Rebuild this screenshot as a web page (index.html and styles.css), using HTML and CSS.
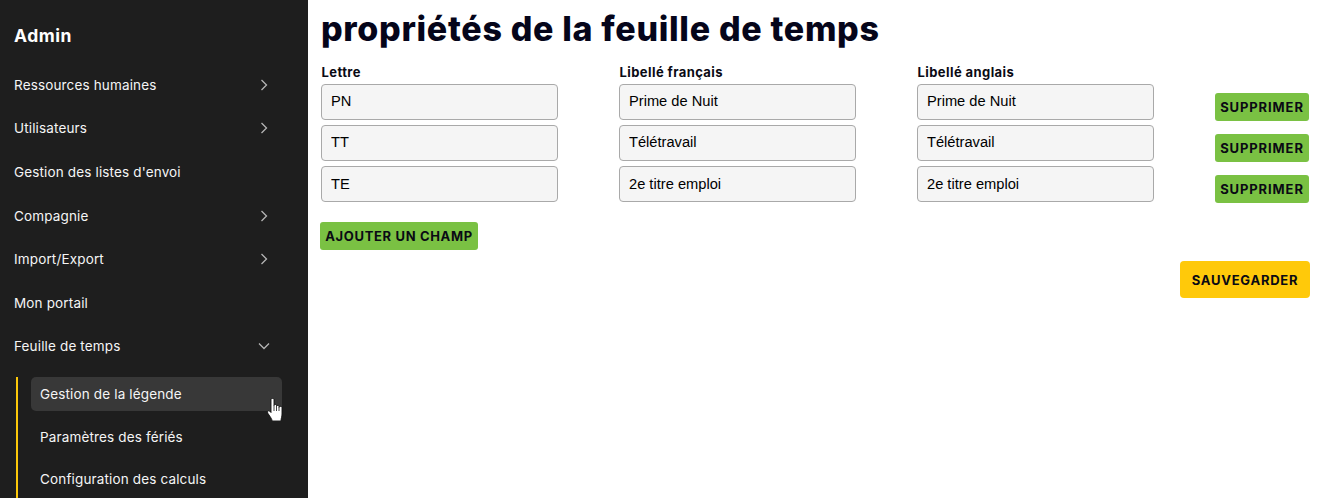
FILE: index.html
```html
<!DOCTYPE html>
<html lang="fr">
<head>
<meta charset="utf-8">
<title>Propriétés de la feuille de temps</title>
<link rel="stylesheet" href="styles.css">
</head>
<body>
<div class="app">
  <aside class="sidebar">
    <div class="brand">Admin</div>
    <nav class="nav">
      <a class="item">Ressources humaines<svg class="chev" viewBox="0 0 12 12"><path d="M3.5 1 8.5 6 3.5 11"/></svg></a>
      <a class="item">Utilisateurs<svg class="chev" viewBox="0 0 12 12"><path d="M3.5 1 8.5 6 3.5 11"/></svg></a>
      <a class="item">Gestion des listes d'envoi</a>
      <a class="item">Compagnie<svg class="chev" viewBox="0 0 12 12"><path d="M3.5 1 8.5 6 3.5 11"/></svg></a>
      <a class="item">Import/Export<svg class="chev" viewBox="0 0 12 12"><path d="M3.5 1 8.5 6 3.5 11"/></svg></a>
      <a class="item">Mon portail</a>
      <a class="item">Feuille de temps<svg class="chev" viewBox="0 0 12 12"><path d="M1 3.5 6 8.5 11 3.5"/></svg></a>
    </nav>
    <div class="sub">
      <a class="subitem active">Gestion de la légende</a>
      <a class="subitem">Paramètres des fériés</a>
      <a class="subitem">Configuration des calculs</a>
      <svg class="cursor" viewBox="0 0 16 23"><path d="M4 1.5C4 0 7 0 7 1.500V7.500C7 6 9.500 6 9.500 7.500V8.500C9.500 7 12 7 12 8.500V9.500C12 8 15 8 15 9.500V16C15 19 14 20 14 23H5C5 21 4 20 1 15.500C0 14 1 12 2.500 13L4 14.500Z"/><path class="lines" d="M7 7.500V13M9.500 8.500V13M12 9.500V13"/></svg>
    </div>
  </aside>
  <main class="main">
    <h1 class="title">propriétés de la feuille de temps</h1>
    <div class="heads">
      <label class="head">Lettre</label>
      <label class="head">Libellé français</label>
      <label class="head">Libellé anglais</label>
    </div>
    <div class="row">
      <input class="field" value="PN"><input class="field" value="Prime de Nuit"><input class="field" value="Prime de Nuit">
      <button class="btn del">SUPPRIMER</button>
    </div>
    <div class="row">
      <input class="field" value="TT"><input class="field" value="Télétravail"><input class="field" value="Télétravail">
      <button class="btn del">SUPPRIMER</button>
    </div>
    <div class="row">
      <input class="field" value="TE"><input class="field" value="2e titre emploi"><input class="field" value="2e titre emploi">
      <button class="btn del">SUPPRIMER</button>
    </div>
    <button class="btn add">AJOUTER UN CHAMP</button>
    <div class="actions"><button class="btn save">SAUVEGARDER</button></div>
  </main>
</div>
</body>
</html>
```
FILE: styles.css
```css
* { box-sizing: border-box; }
html, body { margin: 0; height: 100%; overflow: hidden; background: #fff; }
body { font-family: Inter, "Liberation Sans", sans-serif; color: #0a0a14; }
.app { display: flex; height: 498px; }

.sidebar { width: 308px; flex: none; background: #1e1e1e; color: #f5f5f5; overflow: hidden; padding: 27px 0 0; }
.brand { font-size: 17.5px; font-weight: 700; line-height: 18px; padding-left: 14px; color: #fff; letter-spacing: .5px; margin-bottom: 18px; }
.nav { display: flex; flex-direction: column; }
.item { height: 43.6px; display: flex; align-items: center; justify-content: space-between; padding: 0 38px 0 14px; font-size: 13.5px; letter-spacing: .15px; }
.chev { width: 12px; height: 12px; fill: none; stroke: #b5b5b5; stroke-width: 1.3; }

.sub { position: relative; margin: 9px 0 0 16px; border-left: 2px solid #fcc80a; height: 125px; padding-left: 13px; width: 266px; display: flex; flex-direction: column; }
.subitem { height: 34px; display: flex; align-items: center; padding-left: 9px; font-size: 13.5px; letter-spacing: .15px; border-radius: 5px; flex: none; margin-bottom: 8.5px; }
.subitem.active { background: #383838; }
.cursor { position: absolute; left: 249px; top: 21px; width: 16px; height: 23px; fill: #fff; stroke: #111; stroke-width: .9; }
.cursor .lines { fill: none; stroke-width: .8; }

.main { flex: 1; padding: 10px 19px 0 13px; min-width: 0; }
.title { margin: 0; font-size: 34px; line-height: 38px; font-weight: 800; color: #05051a; letter-spacing: .68px; white-space: nowrap; }
.heads { display: flex; gap: 61px; margin: 15px 0 2px; }
.head { width: 237px; font-size: 13px; font-weight: 700; line-height: 19px; padding-left: .5px; letter-spacing: .42px; }
.row { display: flex; align-items: flex-start; gap: 61px; height: 35.5px; margin-bottom: 5.7px; }
.field { width: 237px; height: 35.5px; background: #f5f5f5; border: 1px solid #a9a9a9; border-radius: 4px; padding: 0 9px 1px; font-family: "Liberation Sans", Arial, sans-serif; font-size: 14.667px; color: #000; outline: none; }
.btn { font-family: Inter, "Liberation Sans", sans-serif; font-weight: 700; color: #0a0a14; border: 0; cursor: pointer; padding: 0; font-size: 13px; }
.del { margin-top: 9px; width: 94px; height: 28px; background: #7ac143; border-radius: 3px; letter-spacing: .9px; flex: none; }
.add { display: block; margin: 20.4px 0 0 -1px; width: 158px; height: 28px; background: #7ac143; border-radius: 3px; letter-spacing: .65px; }
.actions { display: flex; justify-content: flex-end; margin-top: 11px; }
.save { width: 130px; height: 37px; background: #ffc90a; border-radius: 4px; letter-spacing: .76px; }
```
